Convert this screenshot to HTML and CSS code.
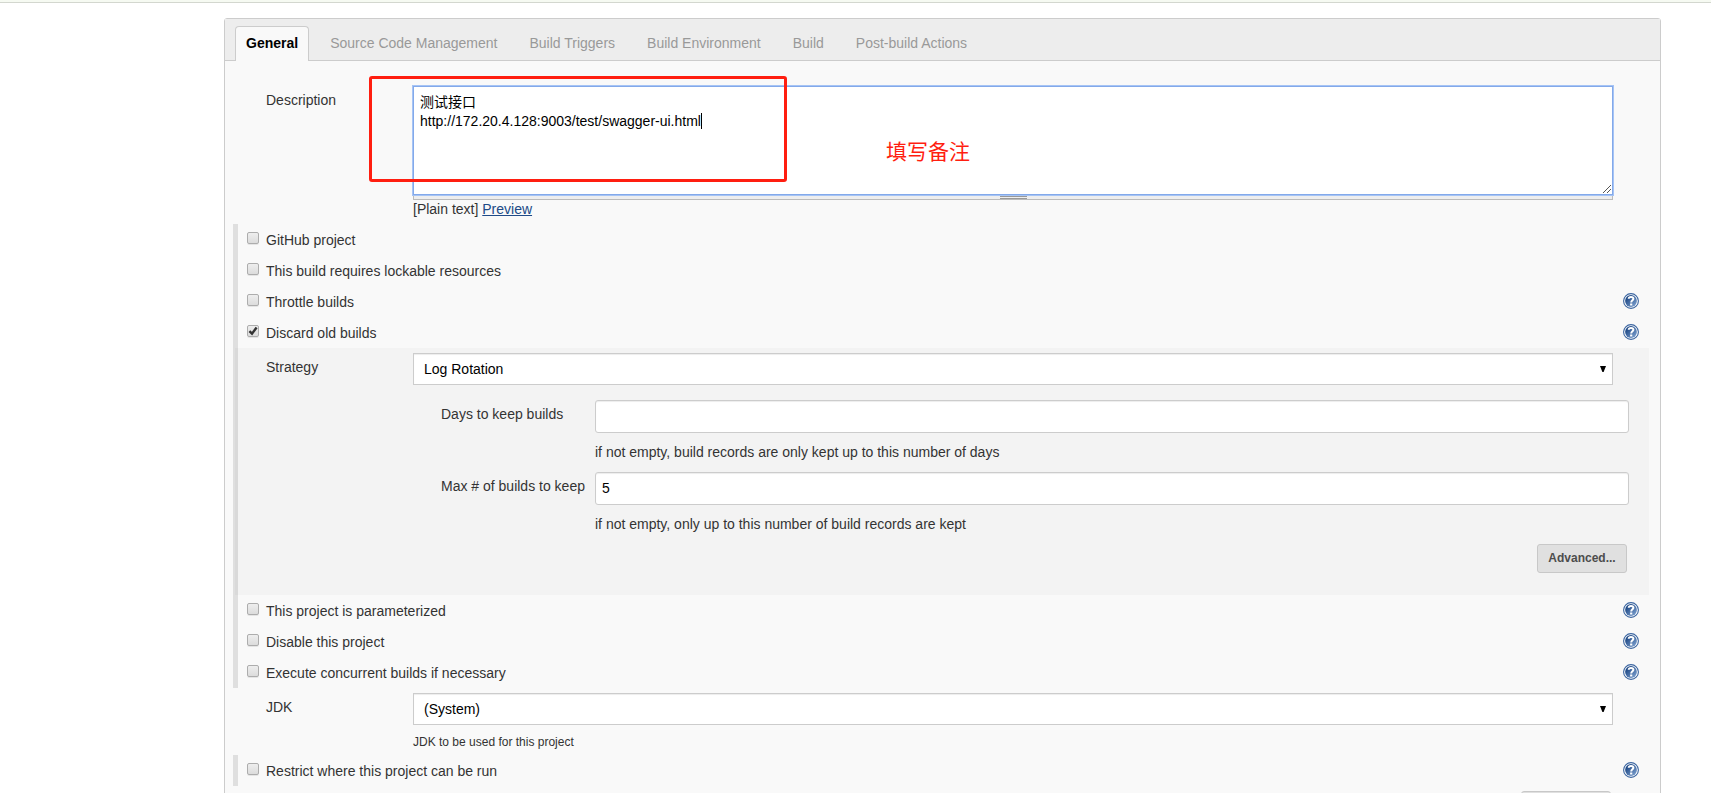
FILE: index.html
```html
<!DOCTYPE html>
<html lang="en">

<head>
  <meta charset="UTF-8">
  <meta name="viewport" content="width=device-width, initial-scale=1.0">
  <title>Config [Jenkins]</title>
  <link rel="stylesheet" href="styles.css">
</head>

<body>
  <!-- shared icon shapes -->
  <svg class="sprite" width="0" height="0">
    <defs>
      <linearGradient id="helpFill" x1="0" y1="0" x2="1" y2="1">
        <stop offset="0.2" stop-color="#204a87" />
        <stop offset="1" stop-color="#86a9d6" />
      </linearGradient>
    </defs>
    <symbol id="help" viewBox="0 0 16 16">
      <circle cx="8" cy="8" r="7.4" fill="#fff" stroke="#3b65a0" stroke-width="1.1" />
      <circle cx="8" cy="8" r="5.9" fill="url(#helpFill)" />
      <path d="M5.700 5.800C5.800 4.300 6.800 3.900 8 3.900c1.400 0 2.400.7 2.400 1.900C10.400 7.300 8.200 7.300 8.200 9.400" fill="none" stroke="#fff" stroke-width="2" />
      <rect x="7.100" y="10.500" width="2.200" height="2" fill="#fff" />
    </symbol>
    <symbol id="arrow" viewBox="0 0 6 6">
      <path d="M0 0h6L3.600 6H2.400z" />
    </symbol>
  </svg>

  <div class="breadcrumb-bar"></div>

  <div class="config">
    <div class="tab-bar">
      <div class="tab active">General</div>
      <div class="tab">Source Code Management</div>
      <div class="tab">Build Triggers</div>
      <div class="tab">Build Environment</div>
      <div class="tab">Build</div>
      <div class="tab">Post-build Actions</div>
    </div>

    <div class="form-row description">
      <div class="label">Description</div>
      <div class="setting">
        <div class="textarea">测试接口<br>http://172.20.4.128:9003/test/swagger-ui.html<span class="caret"></span>
          <svg class="resizer" width="8" height="8" viewBox="0 0 8 8">
            <path d="M0 8L8 0M4 8L8 4" stroke="#555" stroke-width="1" fill="none" />
          </svg>
        </div>
        <div class="handle"><div class="grip"></div></div>
        <div class="preview">[Plain text] <a href="#">Preview</a></div>
      </div>
      <div class="mark-box"></div>
      <div class="mark-text">填写备注</div>
    </div>

    <div class="group">
      <div class="option"><span class="check"></span><span class="name">GitHub project</span></div>
      <div class="option"><span class="check"></span><span class="name">This build requires lockable resources</span></div>
      <div class="option"><span class="check"></span><span class="name">Throttle builds</span><svg class="help"><use href="#help" /></svg></div>
      <div class="option">
        <span class="check"><svg width="10" height="10" viewBox="0 0 10 10"><path d="M1.400 5.200L4 7.700L8.600 1.500" fill="none" stroke="#333" stroke-width="2.400" /></svg></span>
        <span class="name">Discard old builds</span><svg class="help"><use href="#help" /></svg>
      </div>

      <div class="nested">
        <div class="form-row">
          <div class="label">Strategy</div>
          <div class="select">Log Rotation<svg class="arrow"><use href="#arrow" /></svg></div>
        </div>
        <div class="fields">
          <div class="label">Days to keep builds</div>
          <div class="input"></div>
          <div class="note">if not empty, build records are only kept up to this number of days</div>
          <div class="label">Max # of builds to keep</div>
          <div class="input">5</div>
          <div class="note">if not empty, only up to this number of build records are kept</div>
        </div>
        <div class="button">Advanced...</div>
      </div>

      <div class="option"><span class="check"></span><span class="name">This project is parameterized</span><svg class="help"><use href="#help" /></svg></div>
      <div class="option"><span class="check"></span><span class="name">Disable this project</span><svg class="help"><use href="#help" /></svg></div>
      <div class="option"><span class="check"></span><span class="name">Execute concurrent builds if necessary</span><svg class="help"><use href="#help" /></svg></div>
    </div>

    <div class="form-row jdk">
      <div class="label">JDK</div>
      <div class="setting">
        <div class="select">(System)<svg class="arrow"><use href="#arrow" /></svg></div>
        <div class="hint">JDK to be used for this project</div>
      </div>
    </div>

    <div class="group">
      <div class="option"><span class="check"></span><span class="name">Restrict where this project can be run</span><svg class="help"><use href="#help" /></svg></div>
    </div>
    <div class="button last"></div>
  </div>
</body>

</html>
```
FILE: styles.css
```css
:root {
  --border: #ccc;
  --text: #333;
  --mark: #ff1e10;
}

* {
  box-sizing: border-box;
}

body {
  margin: 0;
  height: 793px;
  overflow: hidden;
  background: #fff;
  color: var(--text);
  font-family: "Liberation Sans", "Noto Sans CJK SC", sans-serif;
  font-size: 14px;
  line-height: 20px;
}

.sprite {
  display: block;
}

.breadcrumb-bar {
  height: 3px;
  background: #f6faf2;
  border-bottom: 1px solid #d3d7cf;
}

.config {
  width: 1437px;
  height: 800px;
  margin: 15px 0 0 224px;
  border: 1px solid var(--border);
  border-radius: 3px 3px 0 0;
  background: #f9f9f9;
}

/* tabs */

.tab-bar {
  display: flex;
  align-items: flex-end;
  gap: 10px;
  height: 42px;
  padding-left: 10px;
  background: #ededed;
  border-bottom: 1px solid var(--border);
}

.tab {
  height: 34px;
  padding: 6px 10px 0;
  border: 1px solid transparent;
  border-bottom: 0;
  color: #999;
  white-space: nowrap;
}

.tab.active {
  margin-bottom: -1px;
  height: 35px;
  border-color: var(--border);
  border-radius: 4px 4px 0 0;
  background: #f9f9f9;
  color: #000;
  font-weight: bold;
}

/* form rows */

.form-row {
  display: grid;
  grid-template-columns: 147px 1200px;
  padding-left: 41px;
}

.description {
  position: relative;
  height: 163px;
  padding-top: 25px;
}

.description .label {
  padding-top: 4px;
}

.textarea {
  position: relative;
  height: 109px;
  padding: 7px 7px 0;
  background: #fff;
  box-shadow: 0 0 0 1px #a6c4f5, inset 0 0 0 1px #83a9ea;
  color: #000;
  line-height: 19px;
}

.caret {
  display: inline-block;
  width: 1px;
  height: 16px;
  vertical-align: -3px;
  background: #000;
}

.resizer {
  position: absolute;
  right: 2px;
  bottom: 2px;
}

.handle {
  height: 5px;
  border: 1px solid #bbb;
  border-top: 0;
  background: #eee;
}

.grip {
  width: 27px;
  height: 3px;
  margin: 1px auto 0;
  border: solid #999;
  border-width: 1px 0;
}

.preview {
  margin-top: -1px;
}

.handle {
  height: 4px;
}

.preview a {
  color: #204a87;
}

.mark-box {
  position: absolute;
  left: 144px;
  top: 15px;
  width: 418px;
  height: 106px;
  border: 3px solid var(--mark);
  border-radius: 3px;
}

.mark-text {
  position: absolute;
  left: 661px;
  top: 76px;
  color: var(--mark);
  font-size: 21px;
  line-height: 30px;
}

/* optional blocks */

.group {
  margin-left: 8px;
  border-left: 5px solid #dfdfdf;
}

.option {
  display: flex;
  align-items: flex-start;
  height: 31px;
  padding: 6px 21px 0 9px;
}

.check {
  width: 12px;
  height: 12px;
  margin: 2px 7px 0 0;
  border: 1px solid #adadad;
  border-radius: 2px;
  background: linear-gradient(#eee, #dcdcdc);
  box-shadow: 0 1px 0 rgba(0, 0, 0, 0.08);
}

.check svg {
  display: block;
}

.help {
  width: 16px;
  height: 16px;
  margin: 1px 0 0 auto;
}

.nested {
  height: 247px;
  margin: 0 11px 0 -3px;
  padding: 5px 0 0 3px;
  background: rgba(0, 0, 0, 0.025);
}

.nested .form-row {
  padding-left: 28px;
}

.form-row .select {
  margin-bottom: 6px;
}

.nested .form-row .label {
  padding-top: 4px;
}

.select,
.input {
  border: 1px solid var(--border);
  background: #fff;
  box-shadow: inset 0 1px 1px rgba(0, 0, 0, 0.075);
  color: #000;
}

.select {
  display: flex;
  justify-content: space-between;
  height: 32px;
  padding: 5px 6px 0 10px;
}

.arrow {
  width: 6px;
  height: 6px;
  margin-top: 7px;
}

.fields {
  display: grid;
  grid-template-columns: 154px 1034px;
  grid-template-rows: 33px 39px 33px 39px;
  padding: 9px 0 0 203px;
}

.fields .label {
  padding-top: 4px;
}

.input {
  height: 33px;
  padding: 5px 6px 0;
  border-radius: 3px;
}

.note {
  grid-column: 2;
  padding-top: 9px;
}

.button {
  width: 90px;
  height: 29px;
  margin: 0 22px 0 auto;
  padding-top: 3px;
  border: 1px solid #c8c8c8;
  border-radius: 3px;
  background: #e0e0e0;
  color: #4d4d4d;
  font-size: 12px;
  font-weight: bold;
  text-align: center;
}

.jdk {
  height: 67px;
  padding-top: 5px;
}

.jdk .label {
  padding-top: 4px;
}

.hint {
  margin-top: 7px;
  font-size: 12px;
}

.jdk .select {
  margin-bottom: 0;
}

.button.last {
  margin: 5px 49px 0 auto;
}
```
